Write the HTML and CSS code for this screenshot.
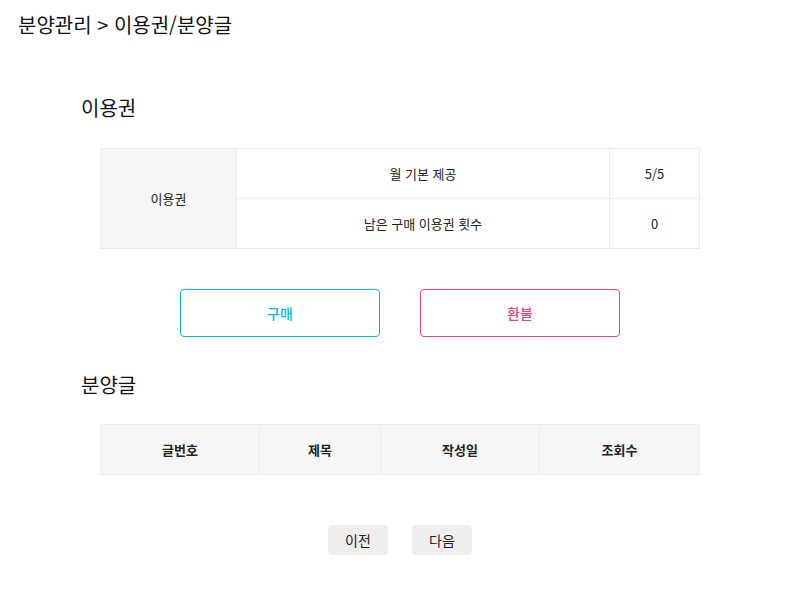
FILE: index.html
```html
<!DOCTYPE html>
<html lang="ko">
<head>
<meta charset="utf-8">
<title>분양관리</title>
<link rel="stylesheet" href="styles.css">
</head>
<body>
<h1 class="page-title">분양관리 &gt; 이용권/분양글</h1>
<main class="content">
  <h2 class="section-title">이용권</h2>
  <table class="ticket-table">
    <tr>
      <th class="label-cell" rowspan="2">이용권</th>
      <td class="desc-cell">월 기본 제공</td>
      <td class="value-cell">5/5</td>
    </tr>
    <tr>
      <td class="desc-cell">남은 구매 이용권 횟수</td>
      <td class="value-cell">0</td>
    </tr>
  </table>
  <div class="action-row">
    <button class="action-btn buy">구매</button>
    <button class="action-btn refund">환불</button>
  </div>
  <h2 class="section-title second">분양글</h2>
  <table class="post-table">
    <tr>
      <th class="col-no">글번호</th>
      <th class="col-title">제목</th>
      <th class="col-date">작성일</th>
      <th class="col-views">조회수</th>
    </tr>
  </table>
  <div class="pager">
    <button class="pager-btn">이전</button>
    <button class="pager-btn">다음</button>
  </div>
</main>
</body>
</html>
```

FILE: styles.css
```css
* { box-sizing: border-box; }
body {
  margin: 0;
  font-family: "Noto Sans CJK KR", "Noto Sans", sans-serif;
  color: #222;
  background: #fff;
}
.page-title {
  margin: 0;
  padding: 10px 18px 0;
  font-size: 20px;
  font-weight: 400;
  line-height: 30px;
  color: #111;
}
.content {
  padding: 0 0 0 81px;
}
.section-title {
  margin: 53px 0 0;
  font-size: 20px;
  font-weight: 400;
  line-height: 30px;
  color: #111;
}
.section-title.second { margin-top: 33px; }
table {
  border-collapse: collapse;
  width: 600px;
  margin-left: 19px;
  font-size: 13px;
  color: #222;
  table-layout: fixed;
}
th, td {
  border: 1px solid #ebebeb;
  text-align: center;
  height: 50px;
  padding: 0;
}
.ticket-table { margin-top: 25px; }
.label-cell {
  width: 136px;
  background: #f6f6f6;
  font-weight: 400;
}
.value-cell { width: 90px; }
.action-row {
  display: flex;
  gap: 40px;
  margin: 40px 0 0 99px;
}
.action-btn {
  width: 200px;
  height: 48px;
  background: #fff;
  border-radius: 4px;
  font-family: inherit;
  font-size: 14px;
  font-weight: 500;
  cursor: pointer;
}
.action-btn.buy { border: 1px solid #00bcd4; color: #00bcd4; }
.action-btn.refund { border: 1px solid #e8467c; color: #e0457a; }
.post-table { margin-top: 24px; }
.post-table th {
  background: #f6f6f6;
  font-weight: 700;
}
.col-no { width: 159px; }
.col-title { width: 121px; }
.col-date { width: 159px; }
.pager {
  display: flex;
  gap: 24px;
  justify-content: center;
  width: 600px;
  margin: 50px 0 0 19px;
}
.pager-btn {
  width: 60px;
  height: 30px;
  border: none;
  border-radius: 4px;
  background: #eeeeee;
  font-family: inherit;
  font-size: 14px;
  color: #222;
}
```
